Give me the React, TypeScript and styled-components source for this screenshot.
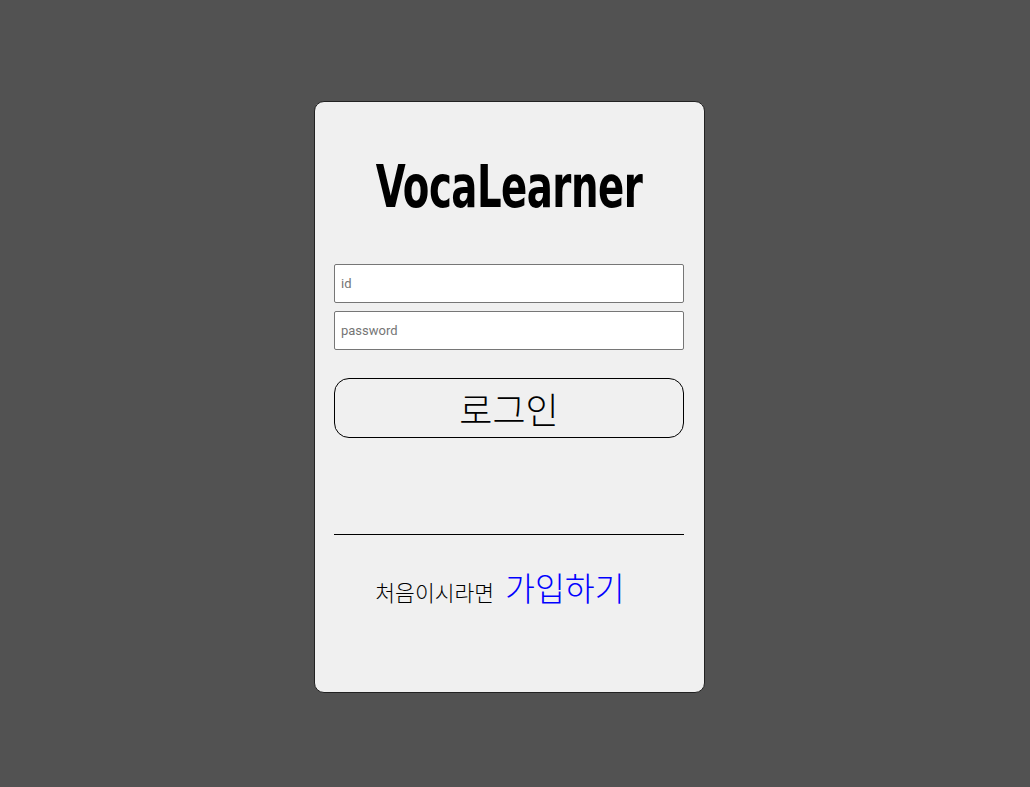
import React from "react";
import styled, { createGlobalStyle } from "styled-components";

const Global = createGlobalStyle`
  html, body { margin: 0; padding: 0; background: #525252; }
  body { font-family: "Noto Sans CJK KR", "Noto Sans", sans-serif; }
  * { box-sizing: border-box; }
`;

const Page = styled.div`
  min-height: 787px;
  padding: 101px 0 0 314px;
`;

const Card = styled.div`
  width: 391px;
  height: 592px;
  background: #f0f0f0;
  border: 1px solid #222;
  border-radius: 10px;
  padding: 0 20px 0 19px;
  display: flex;
  flex-direction: column;
`;

const Title = styled.h1`
  margin: 49px 0 0;
  height: 72px;
  display: flex;
  align-items: center;
  justify-content: center;
  font-family: "DejaVu Sans Condensed", "Liberation Sans Narrow", sans-serif;
  font-weight: 700;
  font-size: 50px;
  letter-spacing: -0.6px;
  color: #000;
  transform: scale(0.86, 1.17);
`;

const Form = styled.form`
  margin-top: 41px;
  display: flex;
  flex-direction: column;
  gap: 8px;
`;

const Input = styled.input`
  width: 350px;
  height: 39px;
  border: 1px solid #767676;
  border-radius: 2px;
  background: #fff;
  padding: 0 6px;
  font-family: Roboto, "Noto Sans", sans-serif;
  font-size: 13px;
  &::placeholder { color: #757575; }
`;

const LoginButton = styled.button`
  margin-top: 20px;
  width: 350px;
  height: 60px;
  border: 1px solid #000;
  border-radius: 15px;
  background: #f0f0f0;
  font-family: "Noto Sans CJK KR", sans-serif;
  font-size: 36px;
  font-weight: 300;
  color: #000;
  display: flex;
  align-items: center;
  justify-content: center;
  padding: 0;
`;

const Divider = styled.hr`
  margin: 96px 0 0;
  width: 350px;
  border: 0;
  border-top: 1px solid #000;
`;

const Footer = styled.div`
  margin-top: 28px;
  display: flex;
  justify-content: center;
  align-items: baseline;
  gap: 11px;
  padding-right: 18px;
`;

const Lead = styled.span`
  font-size: 21.5px;
  font-weight: 300;
  color: #000;
`;

const SignUp = styled.a`
  font-size: 32.5px;
  font-weight: 300;
  color: #0000ff;
  text-decoration: none;
  cursor: pointer;
`;

export default function App() {
  return (
    <>
      <Global />
      <Page>
        <Card>
          <Title>VocaLearner</Title>
          <Form onSubmit={(e) => e.preventDefault()}>
            <Input placeholder="id" />
            <Input type="password" placeholder="password" />
            <LoginButton type="submit">로그인</LoginButton>
          </Form>
          <Divider />
          <Footer>
            <Lead>처음이시라면</Lead>
            <SignUp>가입하기</SignUp>
          </Footer>
        </Card>
      </Page>
    </>
  );
}
